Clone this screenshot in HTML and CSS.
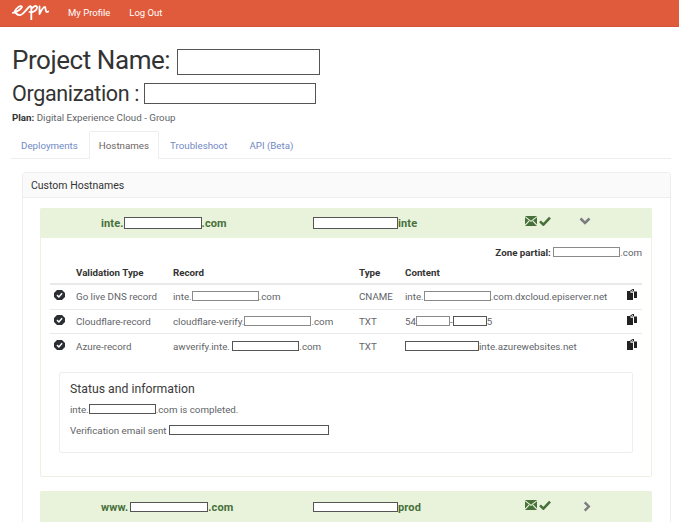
FILE: index.html
```html
<!DOCTYPE html>
<html lang="en">
<head>
<meta charset="utf-8">
<title>Hostnames</title>
<link rel="stylesheet" href="styles.css">
</head>
<body>
<svg class="defs" width="0" height="0" aria-hidden="true">
  <symbol id="mail" viewBox="0 0 12 10"><path d="M0 0h12v10H0z" fill="#47703a"/><path d="M0 .6 6 5.400 12 .6M0 9.400l4.200-4.600M12 9.400 7.800 4.800" fill="none" stroke="#e9f3dc" stroke-width="1.100"/></symbol>
  <symbol id="check" viewBox="0 0 12 10"><path d="M1 5.400 4.400 8.600 11 1.600" fill="none" stroke="#47703a" stroke-width="2.600"/></symbol>
  <symbol id="copy" viewBox="0 0 10 11"><path d="M0 2h3.500v1.800H6V11H0z" fill="#222"/><path d="M3.500 1 6 0h1v2.500h3V9H7V3.200L3.500 2z" fill="#222"/><path d="M4.500 .8 6.800 3" stroke="#fff" stroke-width="1"/></symbol>
  <symbol id="badge" viewBox="0 0 11 10"><path d="M3 0h5l3 3v4l-3 3H3L0 7V3z" fill="#2b2f33"/><path d="M3 5.100 4.900 7 8.100 3.300" fill="none" stroke="#fff" stroke-width="1.500"/></symbol>
</svg>
<header class="nav">
  <svg class="logo" viewBox="0 0 37 16" aria-label="Epi"><path d="M.8 8.800C4 8 8.500 5.500 10 3 8.500 .5 4.500 3.500 2.500 8 4.500 9.500 6 12 8.500 11 11.500 10 15 4.500 17.500 2.500 19 1.500 19.300 3 19.300 5L19.300 15.500M17.500 8C21 9 25.500 6 25 3.200 24.500 1 21.500 2 19.300 5M27.500 2.300 27.500 10C29.500 6 31.500 2.500 33 3 34 4 33 9.500 36.300 7.500" fill="none" stroke="#fff" stroke-width="1.800" stroke-linecap="round" stroke-linejoin="round"/></svg>
  <a class="nav-link">My Profile</a>
  <a class="nav-link">Log Out</a>
</header>
<main class="page">
  <h1 class="title">Project Name: <span class="mask mask-title"></span></h1>
  <h2 class="org">Organization : <span class="mask mask-org"></span></h2>
  <p class="plan"><b>Plan:</b> Digital Experience Cloud - Group</p>
  <nav class="tabs">
    <a class="tab">Deployments</a>
    <a class="tab active">Hostnames</a>
    <a class="tab">Troubleshoot</a>
    <a class="tab">API (Beta)</a>
  </nav>
  <section class="card">
    <div class="card-head">Custom Hostnames</div>
    <div class="card-body">
      <article class="panel">
        <div class="panel-head">
          <span class="host">inte.<span class="mask m78"></span>.com</span>
          <span class="env"><span class="mask m85"></span>inte</span>
          <span class="states"><svg class="i-mail"><use href="#mail"/></svg><svg class="i-check"><use href="#check"/></svg></span>
          <svg class="chev" viewBox="0 0 12 8"><path d="M1.500 1.500 6 6l4.500-4.500" fill="none" stroke="#7c7c80" stroke-width="2.600"/></svg>
        </div>
        <div class="panel-body">
          <p class="zone"><b>Zone partial:</b> <span class="mask m67 soft"></span>.com</p>
          <div class="records">
            <div class="row row-head"><span></span><span>Validation Type</span><span>Record</span><span>Type</span><span>Content</span><span></span></div>
            <div class="row"><svg class="i-badge"><use href="#badge"/></svg><span>Go live DNS record</span><span>inte.<span class="mask m67 soft"></span>.com</span><span>CNAME</span><span>inte.<span class="mask m67 soft"></span>.com.dxcloud.episerver.net</span><svg class="i-copy"><use href="#copy"/></svg></div>
            <div class="row"><svg class="i-badge"><use href="#badge"/></svg><span>Cloudflare-record</span><span>cloudflare-verify.<span class="mask m67 soft"></span>.com</span><span>TXT</span><span>54<span class="mask m34 soft"></span>-<span class="mask m34"></span>5</span><svg class="i-copy"><use href="#copy"/></svg></div>
            <div class="row"><svg class="i-badge"><use href="#badge"/></svg><span>Azure-record</span><span>awverify.inte. <span class="mask m67"></span>.com</span><span>TXT</span><span><span class="mask m74"></span>inte.azurewebsites.net</span><svg class="i-copy"><use href="#copy"/></svg></div>
          </div>
          <div class="status">
            <h3 class="status-title">Status and information</h3>
            <p class="status-line">inte.<span class="mask m67"></span>.com is completed.</p>
            <p class="status-line">Verification email sent <span class="mask m160"></span></p>
          </div>
        </div>
      </article>
      <article class="panel">
        <div class="panel-head panel-head-closed">
          <span class="host">www.<span class="mask m78 thin"></span>.com</span>
          <span class="env"><span class="mask m85 thin-env"></span>prod</span>
          <span class="states"><svg class="i-mail"><use href="#mail"/></svg><svg class="i-check"><use href="#check"/></svg></span>
          <svg class="chev right" viewBox="0 0 8 12"><path d="M1.500 1.500 6 6l-4.500 4.500" fill="none" stroke="#7c7c80" stroke-width="2.600"/></svg>
        </div>
      </article>
    </div>
  </section>
</main>
</body>
</html>
```
FILE: styles.css
```css
* { box-sizing: border-box; }
html, body { height: 522px; overflow: hidden; }
body {
  margin: 0;
  background: #fff;
  color: #616468;
  font-family: Roboto, "Liberation Sans", sans-serif;
  font-size: 10px;
}
.defs { position: absolute; }
.nav {
  height: 27px;
  padding: 0 0 1px 12px;
  display: flex;
  align-items: center;
  background: #e05a3c;
  border-bottom: 1px solid #d5553a;
}
.logo { width: 37px; height: 16px; margin: -2px 19px 0 0; }
.nav-link { color: #fff; font-size: 9.500px; margin-right: 19px; }
.page { padding: 0 8px 0 11px; }
.title {
  margin: 21px 0 0 1px;
  height: 27px;
  display: flex;
  align-items: flex-start;
  color: #333;
  font-size: 26px;
  font-weight: 400;
  letter-spacing: -.44px;
  line-height: 24px;
  white-space: pre;
}
.org {
  margin: 8px 0 0 1px;
  height: 21px;
  display: flex;
  align-items: center;
  color: #333;
  font-size: 21.500px;
  font-weight: 400;
  letter-spacing: -.35px;
  line-height: 21px;
  white-space: pre;
}
.mask {
  display: inline-block;
  height: 10px;
  margin-bottom: -1px;
  vertical-align: baseline;
  background: #fff;
  border: 1px solid #555;
}
.soft { border-color: #8a8a8a; }
.mask-title { width: 143px; height: 26px; margin: 1px 0 0 1px; }
.mask-org { width: 172px; height: 21px; margin: 0; }
.m34 { width: 34px; }
.m67 { width: 67px; }
.m74 { width: 74px; }
.m78 { width: 78px; height: 12px; margin-bottom: -2px; }
.m85 { width: 85px; height: 12px; margin-bottom: -2px; }
.thin { height: 10px; margin-bottom: -1px; margin-left: 2px; }
.thin-env { height: 10px; margin-bottom: -1px; }
.m160 { width: 160px; }
.plan { margin: 8px 0 0 1px; line-height: 12px; font-size: 9.750px; }
.plan b { color: #333; }
.tabs {
  display: flex;
  margin-top: 7px;
  height: 28px;
  border-bottom: 1px solid #eceeee;
  font-size: 9.750px;
}
.tab {
  padding: 8px 10px 0;
  color: #7189c5;
  border: 1px solid transparent;
}
.tab:first-child { padding-left: 9px; }
.tab.active {
  padding: 8px 9px 0;
  color: #6b6460;
  background: #fff;
  height: 28px;
  border-color: #eceeee #eceeee #fff;
  border-radius: 2px 2px 0 0;
}
.card {
  margin: 13px 0 0 11px;
  border: 1px solid #eeeeee;
  border-radius: 3px;
}
.card-head {
  height: 25px;
  padding: 6px 8px 0;
  background: #fafafa;
  border-bottom: 1px solid #eeeeee;
  color: #333;
  font-size: 10.500px;
}
.card-body { padding: 10px 18px 0 17px; }
.panel {
  margin-bottom: 14px;
  border: 1px solid #edf1e4;
  border-radius: 2px;
}
.panel-head {
  position: relative;
  height: 30px;
  margin: -1px;
  display: flex;
  align-items: center;
  background: #e9f3dc;
  border-radius: 2px 2px 0 0;
  color: #47703a;
  font-size: 11px;
  font-weight: 700;
  letter-spacing: .13px;
}
.panel-head-closed { height: 31px; padding-top: 2px; }
.host { width: 212px; margin-left: 61px; white-space: nowrap; }
.env { width: 212px; white-space: nowrap; }
.states { display: flex; align-items: center; gap: 2px; width: 54px; margin-top: -4px; }
.i-mail { width: 12px; height: 10px; }
.i-check { width: 12px; height: 10px; }
.chev { width: 12px; height: 8px; margin-top: -4px; }
.chev.right { width: 8px; height: 11px; margin-left: 4px; margin-top: -2px; }
.panel-body { padding: 9px 9px 23px; }
.zone { margin: 0; text-align: right; font-size: 9.750px; line-height: 14px; }
.zone b { color: #333; }
.records { margin-top: 5px; }
.row {
  display: grid;
  grid-template-columns: 26px 97px 186px 46px 1fr 15px;
  align-items: center;
  height: 24.500px;
  border-bottom: 1px solid #e9e9e9;
  font-size: 9.750px;
  white-space: nowrap;
}
.row:last-child { border-bottom: 0; }
.row-head {
  height: 20px;
  padding-bottom: 4px;
  border-bottom: 2px solid #e9e9e9;
  color: #333;
  font-weight: 700;
}
.i-badge { width: 11px; height: 10px; margin: -3px 0 0 4px; }
.i-copy { width: 10px; height: 11px; margin: -4px 0 0 0; }
.status {
  margin: 13px 9px 0;
  height: 81px;
  padding: 10px;
  border: 1px solid #eeeeee;
  border-radius: 2px;
}
.status-title { margin: 0 0 6px; color: #3b3b3b; font-size: 12.250px; font-weight: 400; line-height: 13px; }
.status-line { margin: 0; height: 21px; line-height: 12px; padding-top: 2px; font-size: 9.750px; }
```
